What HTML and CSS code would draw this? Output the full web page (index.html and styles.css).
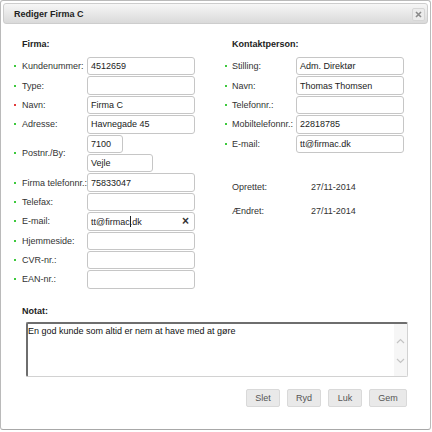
FILE: index.html
```html
<!DOCTYPE html>
<html>
<head>
<meta charset="utf-8">
<link rel="stylesheet" href="styles.css">
</head>
<body>
<div class="dialog">
  <div class="titlebar">
    <span class="title">Rediger Firma C</span>
    <span class="close"><svg width="7" height="7" viewBox="0 0 7 7"><path d="M1 1L6 6M6 1L1 6" stroke="#8a8a8a" stroke-width="1.6" fill="none"/></svg></span>
  </div>
  <div class="content">
    <div class="columns">
      <div class="col">
        <div class="heading">Firma:</div>
        <div class="row"><span class="dot"></span><span class="label">Kundenummer:</span><span class="inp">4512659</span></div>
        <div class="row"><span class="dot"></span><span class="label">Type:</span><span class="inp"></span></div>
        <div class="row"><span class="dot red"></span><span class="label">Navn:</span><span class="inp">Firma C</span></div>
        <div class="row"><span class="dot"></span><span class="label">Adresse:</span><span class="inp">Havnegade 45</span></div>
        <div class="row tall"><span class="dot"></span><span class="label">Postnr./By:</span>
          <span class="stack"><span class="inp zip">7100</span><span class="inp city">Vejle</span></span>
        </div>
        <div class="row"><span class="dot"></span><span class="label">Firma telefonnr.:</span><span class="inp">75833047</span></div>
        <div class="row"><span class="dot"></span><span class="label">Telefax:</span><span class="inp"></span></div>
        <div class="row"><span class="dot"></span><span class="label">E-mail:</span><span class="inp focus"><span class="val">tt@firmac<span class="caret"></span>.dk</span><span class="clear">×</span></span></div>
        <div class="row"><span class="dot"></span><span class="label">Hjemmeside:</span><span class="inp"></span></div>
        <div class="row"><span class="dot"></span><span class="label">CVR-nr.:</span><span class="inp"></span></div>
        <div class="row"><span class="dot"></span><span class="label">EAN-nr.:</span><span class="inp"></span></div>
      </div>
      <div class="col right">
        <div class="heading">Kontaktperson:</div>
        <div class="row"><span class="dot"></span><span class="label">Stilling:</span><span class="inp">Adm. Direktør</span></div>
        <div class="row"><span class="dot"></span><span class="label">Navn:</span><span class="inp">Thomas Thomsen</span></div>
        <div class="row"><span class="dot"></span><span class="label">Telefonnr.:</span><span class="inp"></span></div>
        <div class="row"><span class="dot"></span><span class="label">Mobiltelefonnr.:</span><span class="inp">22818785</span></div>
        <div class="row"><span class="dot"></span><span class="label">E-mail:</span><span class="inp">tt@firmac.dk</span></div>
        <div class="meta">
          <div class="meta-row"><span class="meta-label">Oprettet:</span><span>27/11-2014</span></div>
          <div class="meta-row"><span class="meta-label">Ændret:</span><span>27/11-2014</span></div>
        </div>
      </div>
    </div>
    <div class="heading notat-heading">Notat:</div>
    <div class="textarea">
      <div class="ta-text">En god kunde som altid er nem at have med at gøre</div>
      <div class="ta-scroll">
        <svg width="9" height="6" viewBox="0 0 9 6"><path d="M1 5L4.5 1.5L8 5" stroke="#c4c4c4" stroke-width="1.2" fill="none"/></svg>
        <svg width="9" height="6" viewBox="0 0 9 6"><path d="M1 1L4.5 4.5L8 1" stroke="#c4c4c4" stroke-width="1.2" fill="none"/></svg>
      </div>
    </div>
    <div class="buttons">
      <span class="btn">Slet</span>
      <span class="btn">Ryd</span>
      <span class="btn">Luk</span>
      <span class="btn wide">Gem</span>
    </div>
  </div>
</div>
</body>
</html>
```

FILE: styles.css
```css
body {
  margin: 0;
  font-family: "Liberation Sans", Arial, sans-serif;
  font-size: 9px;
  color: #222;
  background: #fff;
}
.dialog {
  width: 431px;
  height: 430px;
  box-sizing: border-box;
  border: 1px solid #bababa;
  border-bottom-color: #a8a8a8;
  border-radius: 3px;
  background: #fff;
}
.titlebar {
  margin: 2px;
  height: 21px;
  box-sizing: border-box;
  border: 1px solid #cdcdcd;
  border-radius: 3px;
  background: linear-gradient(#f6f6f6, #dadada);
  display: flex;
  align-items: center;
  justify-content: space-between;
  padding: 0 2px 0 10px;
}
.title {
  font-weight: bold;
  color: #222;
}
.close {
  width: 13px;
  height: 13px;
  box-sizing: border-box;
  border: 1px solid #d6d6d6;
  border-radius: 2px;
  background: #ececec;
  display: flex;
  align-items: center;
  justify-content: center;
  margin-top: 1px;
}
.content {
  padding: 12px 0 0 13px;
}
.columns {
  display: flex;
  gap: 30px;
}
.col {
  display: flex;
  flex-direction: column;
}
.heading {
  font-weight: bold;
  line-height: 12px;
  height: 12px;
  padding-left: 8px;
  margin-bottom: 7px;
  color: #222;
}
.right .heading {
  padding-left: 7px;
}
.row {
  display: flex;
  align-items: center;
  height: 18.4px;
  margin-bottom: 1px;
}
.row.tall {
  height: auto;
}
.dot {
  flex: none;
  width: 2px;
  height: 2px;
  background: #3cc93c;
  margin-right: 6px;
}
.right .dot {
  margin-right: 5px;
}
.dot.red {
  background: #e23b3b;
}
.label {
  flex: none;
  width: 65px;
  white-space: nowrap;
  color: #333;
}
.right .label {
  width: 64px;
}
.inp {
  flex: none;
  width: 108px;
  height: 18.4px;
  box-sizing: border-box;
  border: 1px solid #c6c6c6;
  border-radius: 3px;
  background: #fff;
  padding-left: 3px;
  display: flex;
  align-items: center;
  color: #222;
  white-space: nowrap;
}
.stack {
  display: flex;
  flex-direction: column;
  gap: 1px;
}
.inp.zip {
  width: 36px;
}
.inp.city {
  width: 66px;
}
.inp.focus {
  justify-content: space-between;
  padding-right: 5px;
}
.caret {
  display: inline-block;
  width: 1px;
  height: 11px;
  background: #222;
  vertical-align: -2px;
  margin-right: -1px;
}
.clear {
  font-size: 12px;
  font-weight: bold;
  color: #333;
  line-height: 10px;
}
.meta {
  margin-top: 27px;
  padding-left: 7px;
}
.meta-row {
  display: flex;
  line-height: 12px;
  height: 12px;
  margin-bottom: 11.7px;
  color: #333;
}
.meta-label {
  width: 79px;
}
.notat-heading {
  margin-top: 15px;
  margin-bottom: 5px;
}
.textarea {
  margin-left: 12px;
  width: 382px;
  height: 55px;
  box-sizing: border-box;
  border-style: solid;
  border-width: 2px 1px 1px 2px;
  border-color: #6e6e6e #d2d2d2 #d2d2d2 #6e6e6e;
  border-radius: 2px;
  display: flex;
}
.ta-text {
  flex: 1;
  line-height: 12px;
  padding-top: 1px;
  color: #111;
}
.ta-scroll {
  width: 13px;
  background: #f6f6f6;
  display: flex;
  flex-direction: column;
  align-items: center;
  padding-top: 14px;
  gap: 14px;
}
.buttons {
  margin: 12px 0 0 12px;
  width: 381px;
  display: flex;
  justify-content: flex-end;
  gap: 7px;
}
.btn {
  width: 34px;
  height: 18px;
  box-sizing: border-box;
  border: 1px solid #d9d9d9;
  border-radius: 2px;
  background: #e9e9e9;
  color: #555;
  display: flex;
  align-items: center;
  justify-content: center;
}
.btn.wide {
  width: 38px;
}
```
